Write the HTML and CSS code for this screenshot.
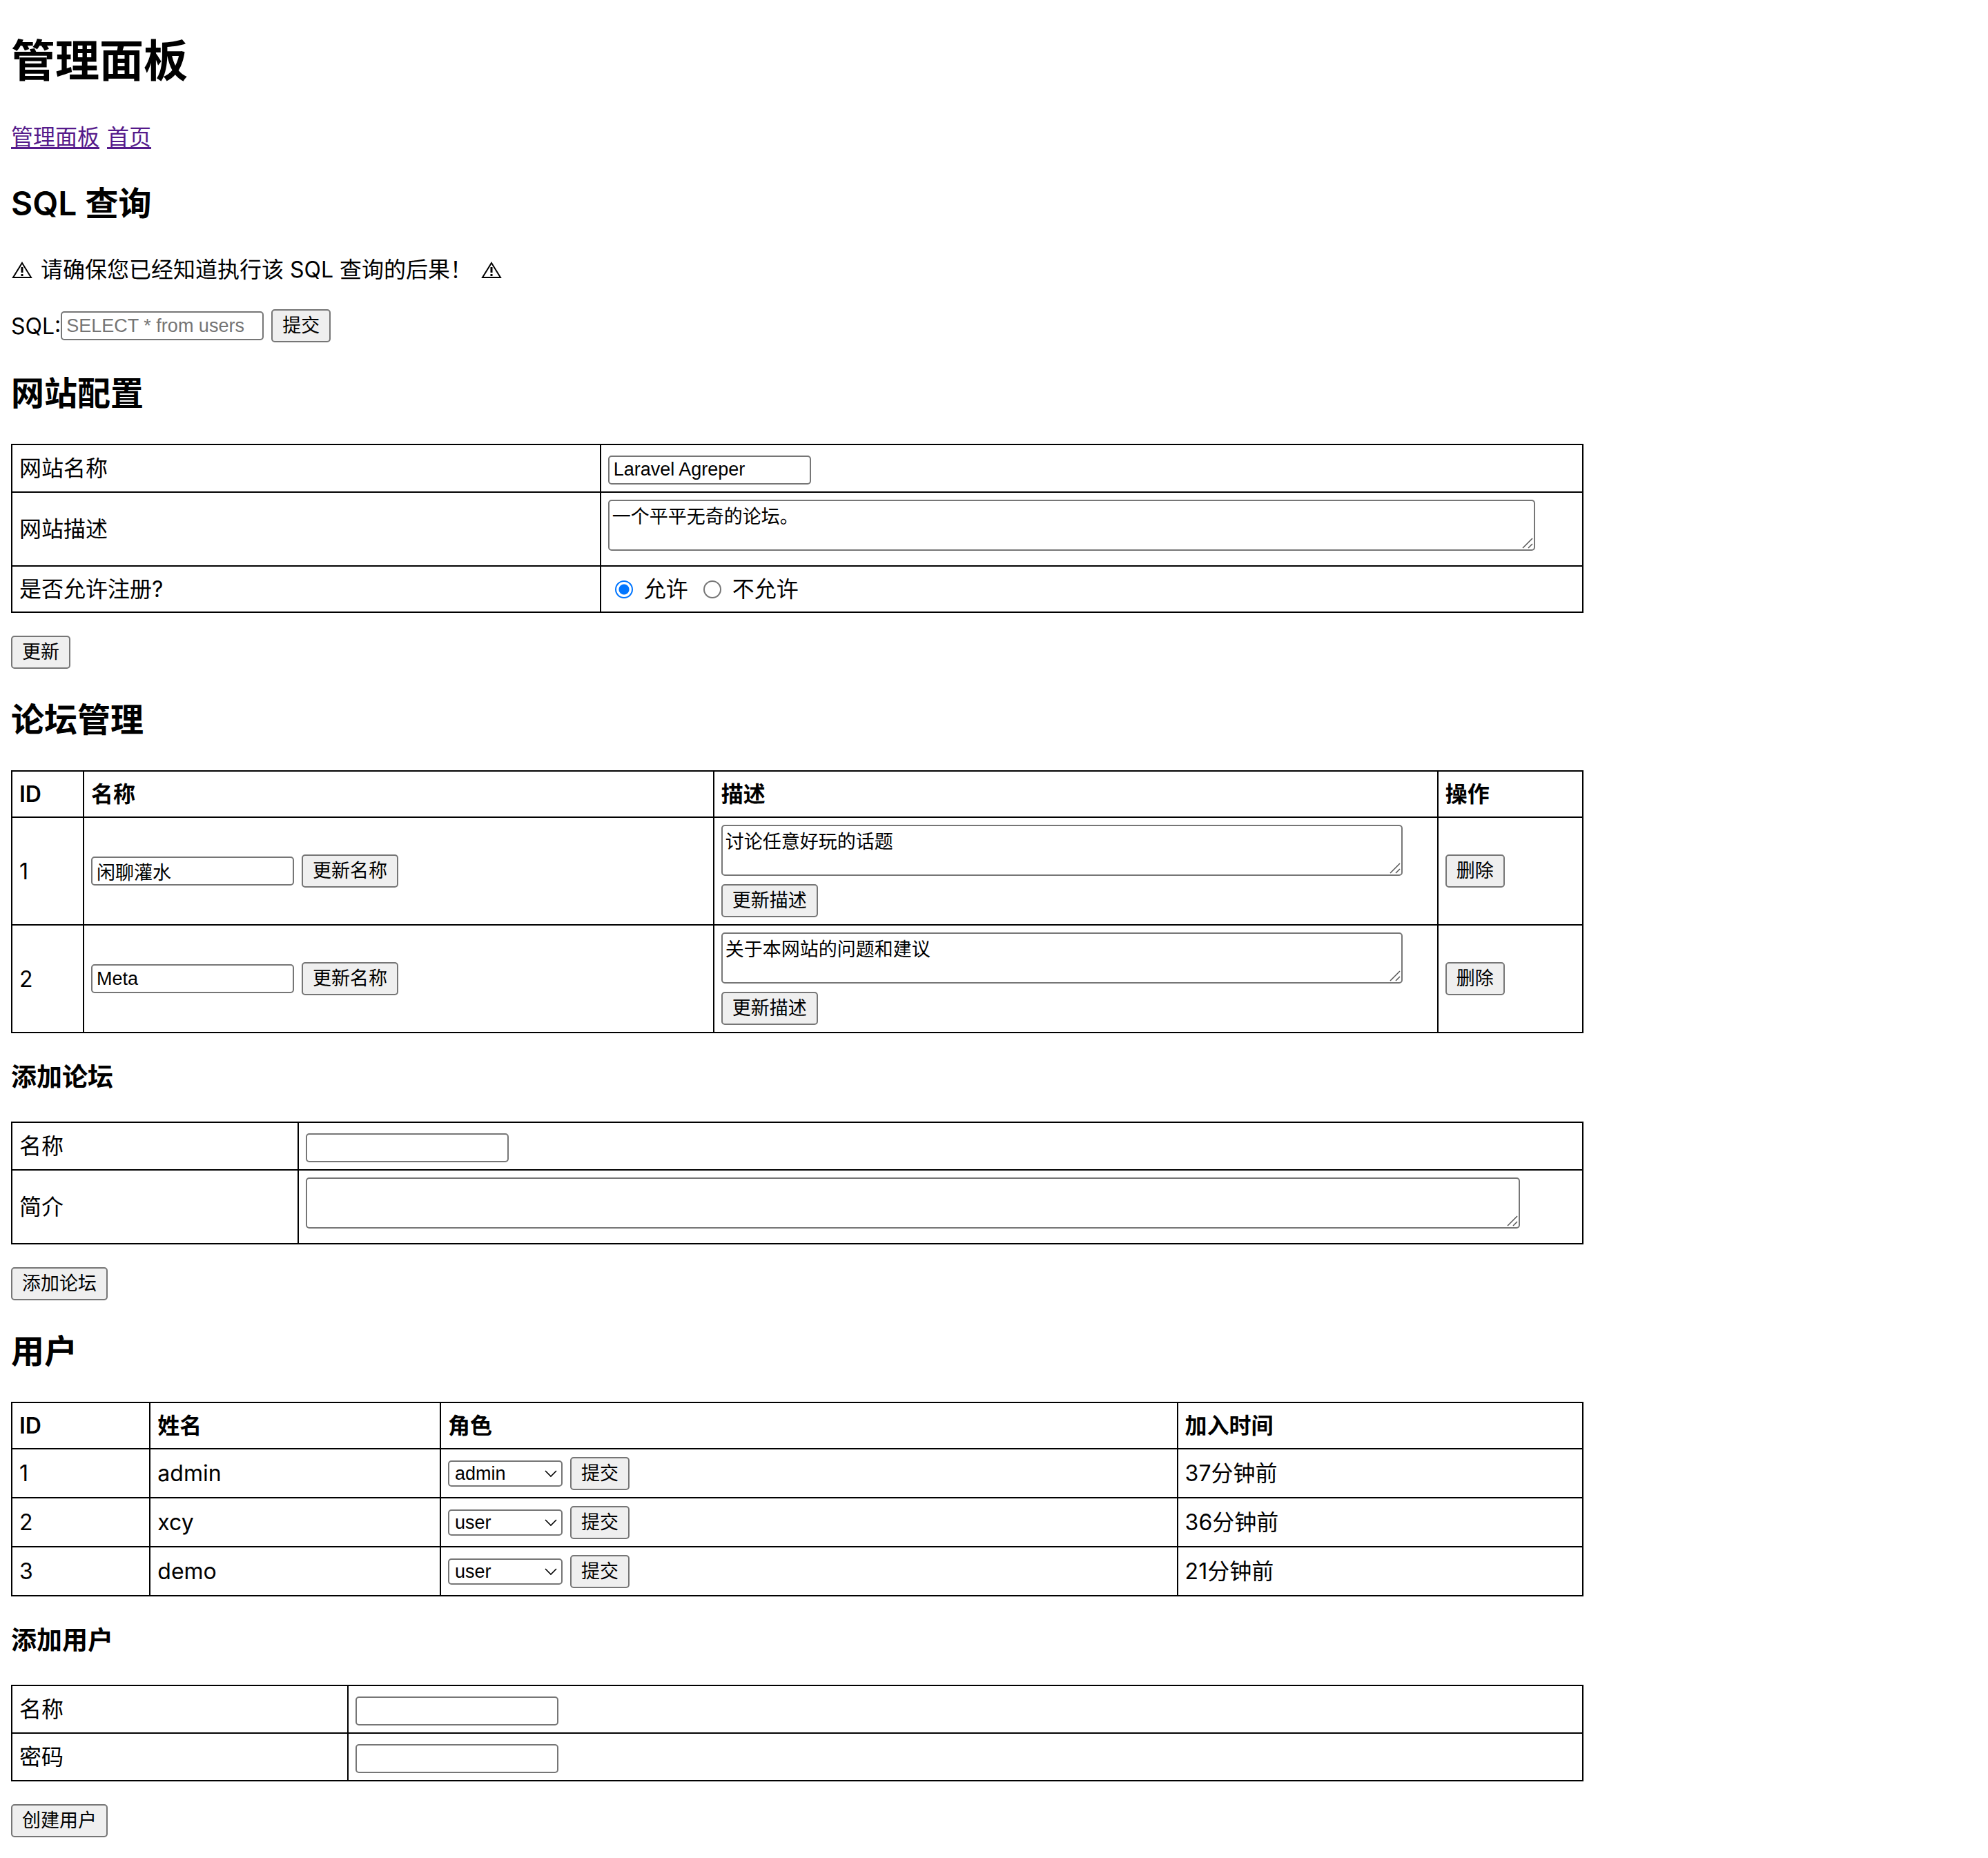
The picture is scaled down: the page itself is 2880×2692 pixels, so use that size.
FILE: index.html
```html
<!DOCTYPE html>
<html lang="zh-CN">
<head>
<meta charset="utf-8">
<meta name="viewport" content="width=device-width, initial-scale=1">
<title>管理面板</title>
<link rel="stylesheet" href="styles.css">
</head>
<body>
<h1>管理面板</h1>
<nav class="nav"><a href="#admin">管理面板</a><a href="#home">首页</a></nav>

<h2>SQL 查询</h2>
<p class="notice"><svg class="warn" viewBox="0 0 31 24" aria-hidden="true"><path d="M16 2 L29 23 H3 Z"/><path class="mark" d="M16 8 V16 M16 18 V21"/></svg><span>请确保您已经知道执行该 SQL 查询的后果！</span><svg class="warn" viewBox="0 0 31 24" aria-hidden="true"><path d="M16 2 L29 23 H3 Z"/><path class="mark" d="M16 8 V16 M16 18 V21"/></svg></p>
<form class="row query">
<div class="row-field"><label for="sql">SQL:</label><input class="field" id="sql" type="text" placeholder="SELECT * from users"></div>
<button type="button">提交</button>
</form>

<h2>网站配置</h2>
<form>
<table>
<colgroup><col class="site-label"><col></colgroup>
<tr class="field-row"><td><label for="site-name">网站名称</label></td><td><input class="field" id="site-name" type="text" value="Laravel Agreper"></td></tr>
<tr><td><label for="site-desc">网站描述</label></td><td><textarea id="site-desc">一个平平无奇的论坛。</textarea></td></tr>
<tr><td>是否允许注册?</td><td><div class="choices"><input type="radio" name="reg" id="reg-yes" checked><label for="reg-yes">允许</label><input type="radio" name="reg" id="reg-no"><label for="reg-no">不允许</label></div></td></tr>
</table>
<div class="actions"><button type="button">更新</button></div>
</form>

<h2>论坛管理</h2>
<table>
<colgroup><col class="forum-id"><col class="forum-name"><col class="forum-desc"><col></colgroup>
<tr><th>ID</th><th>名称</th><th>描述</th><th>操作</th></tr>
<tr>
<td>1</td>
<td><div class="row"><input class="field" type="text" aria-label="名称" value="闲聊灌水"><button type="button">更新名称</button></div></td>
<td><div class="stack"><textarea aria-label="描述">讨论任意好玩的话题</textarea><button type="button">更新描述</button></div></td>
<td><div class="row"><button type="button">删除</button></div></td>
</tr>
<tr>
<td>2</td>
<td><div class="row"><input class="field" type="text" aria-label="名称" value="Meta"><button type="button">更新名称</button></div></td>
<td><div class="stack"><textarea aria-label="描述">关于本网站的问题和建议</textarea><button type="button">更新描述</button></div></td>
<td><div class="row"><button type="button">删除</button></div></td>
</tr>
</table>

<h3>添加论坛</h3>
<form>
<table>
<colgroup><col class="new-forum-label"><col></colgroup>
<tr class="field-row"><td><label for="forum-name">名称</label></td><td><input class="field" id="forum-name" type="text"></td></tr>
<tr><td><label for="forum-desc">简介</label></td><td><textarea id="forum-desc"></textarea></td></tr>
</table>
<div class="actions"><button type="button">添加论坛</button></div>
</form>

<h2>用户</h2>
<table>
<colgroup><col class="user-id"><col class="user-name"><col class="user-role"><col></colgroup>
<tr><th>ID</th><th>姓名</th><th>角色</th><th>加入时间</th></tr>
<tr><td>1</td><td>admin</td><td><div class="row"><select aria-label="角色"><option selected>admin</option><option>user</option></select><button type="button">提交</button></div></td><td>37分钟前</td></tr>
<tr><td>2</td><td>xcy</td><td><div class="row"><select aria-label="角色"><option>admin</option><option selected>user</option></select><button type="button">提交</button></div></td><td>36分钟前</td></tr>
<tr><td>3</td><td>demo</td><td><div class="row"><select aria-label="角色"><option>admin</option><option selected>user</option></select><button type="button">提交</button></div></td><td>21分钟前</td></tr>
</table>

<h3>添加用户</h3>
<form>
<table>
<colgroup><col class="new-user-label"><col></colgroup>
<tr class="field-row"><td><label for="user-name">名称</label></td><td><input class="field" id="user-name" type="text"></td></tr>
<tr class="field-row"><td><label for="user-pass">密码</label></td><td><input class="field" id="user-pass" type="password"></td></tr>
</table>
<div class="actions"><button type="button">创建用户</button></div>
</form>
</body>
</html>
```
FILE: styles.css
```css
* { box-sizing: border-box; }

body {
  display: flow-root;
  margin: 16px;
  background: #fff;
  color: #000;
  font: 32px/45px Inter, "Noto Sans CJK SC", sans-serif;
}

h1 { margin: 27px 0 43px; font-size: 64px; line-height: 90px; }
h2 { margin: 40px 0; font-size: 48px; line-height: 67px; font-weight: 600; }
h3 { margin: 37px 0; font-size: 37px; line-height: 54px; }
a { color: #551a8b; text-decoration-thickness: 3px; text-underline-offset: 3px; }

.nav { display: flex; gap: 11px; }
.notice { display: flex; align-items: center; gap: 12px; margin: 32px 0; }

.warn { width: 31px; height: 24px; fill: none; stroke: #000; stroke-width: 2; }
.warn .mark { stroke-width: 3; }

table {
  width: 80%;
  table-layout: fixed;
  border-collapse: collapse;
}
th, td { padding: 10px; border: 2px solid #000; text-align: left; }
th { font-weight: 600; }
.field-row { height: 69px; }

.site-label { width: 37.46%; }
.forum-id { width: 4.57%; }
.forum-name { width: 40.1%; }
.forum-desc { width: 46.08%; }
.new-forum-label { width: 18.25%; }
.user-id { width: 8.8%; }
.user-name { width: 18.48%; }
.user-role { width: 46.9%; }
.new-user-label { width: 21.4%; }

button, .field, textarea, select {
  margin: 0;
  border: 2px solid #767676;
  border-radius: 5px;
  color: #000;
  font: 27px/38px "Liberation Sans", "Noto Sans CJK SC", sans-serif;
}
button { height: 48px; padding: 0 14px; line-height: 44px; background: #efefef; }
.field { width: 294px; height: 42px; padding: 2px 6px; background: #fff; }
.field::placeholder { color: #757575; }

textarea {
  width: calc(95% + 12px);
  height: 74px;
  padding: 4px 4px 0;
  line-height: 38px;
  overflow: hidden;
  background: #fff url("data:image/svg+xml,%3Csvg xmlns='http://www.w3.org/2000/svg' width='18' height='18' fill='none' stroke='%23555' stroke-width='1.5'%3E%3Cpath d='M2 16 16 2M10 16 16 10'/%3E%3C/svg%3E") no-repeat right bottom;
}
textarea::-webkit-resizer { background: transparent; }

select {
  appearance: none;
  width: 166px;
  height: 38px;
  padding: 0 8px;
  line-height: 34px;
  background: #fff url("data:image/svg+xml,%3Csvg xmlns='http://www.w3.org/2000/svg' width='18' height='12' fill='none' stroke='%23000' stroke-width='1.6'%3E%3Cpath d='M1 2 9 10 17 2'/%3E%3C/svg%3E") no-repeat right 6px center;
}

input[type="radio"] {
  appearance: none;
  width: 26px;
  height: 26px;
  margin: 0 4px 0 10px;
  border: 2px solid #767676;
  border-radius: 50%;
}
input[type="radio"]:checked {
  border-color: #0075ff;
  background: radial-gradient(circle, #0075ff 7px, #fff 8px);
}

.row { display: flex; align-items: center; gap: 11px; min-height: 49px; }
.row-field { display: flex; align-items: center; }
.query { padding-top: 3px; }
.choices { display: flex; align-items: center; gap: 12px; }
.stack { display: flex; flex-direction: column; align-items: flex-start; gap: 12px; }
.actions { display: flex; margin-top: 33px; }
```
